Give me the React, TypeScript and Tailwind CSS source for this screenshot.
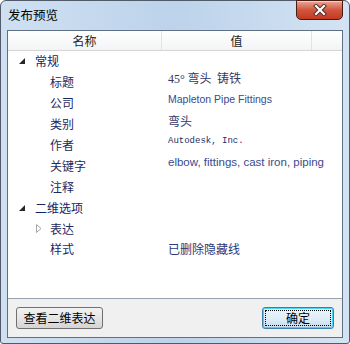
import { ReactNode } from 'react'

const cjk = '"Noto Sans CJK SC", sans-serif'

type Row = {
  label: string
  depth: 0 | 1
  toggle?: 'open' | 'closed'
  value?: ReactNode
}

const rows: Row[] = [
  { label: '常规', depth: 0, toggle: 'open' },
  {
    label: '标题',
    depth: 1,
    value: (
      <span className="text-[12px] text-[#303a6a]">
        <span className="font-['Liberation_Serif'] text-[12px]">45°</span>&nbsp;弯头&nbsp;&nbsp;铸铁
      </span>
    ),
  },
  {
    label: '公司',
    depth: 1,
    value: <span className="font-['Liberation_Sans'] text-[10.5px] text-[#3a4a8c]">Mapleton Pipe Fittings</span>,
  },
  { label: '类别', depth: 1, value: <span className="text-[12px] text-[#303a6a]">弯头</span> },
  {
    label: '作者',
    depth: 1,
    value: <span className="font-['Liberation_Mono'] text-[9px] text-[#1e2a66]">Autodesk, Inc.</span>,
  },
  {
    label: '关键字',
    depth: 1,
    value: (
      <span className="font-['Liberation_Sans'] text-[11.5px] text-[#3a4a8c]">elbow, fittings, cast iron, piping</span>
    ),
  },
  { label: '注释', depth: 1 },
  { label: '二维选项', depth: 0, toggle: 'open' },
  { label: '表达', depth: 1, toggle: 'closed' },
  { label: '样式', depth: 1, value: <span className="text-[12px] text-[#2a3878]">已删除隐藏线</span> },
]

function Toggle({ kind }: { kind: 'open' | 'closed' }) {
  if (kind === 'open') {
    return (
      <svg width="6" height="6" viewBox="0 0 6 6">
        <path d="M6 0 L6 6 L0 6 Z" fill="#262626" />
      </svg>
    )
  }
  return (
    <svg width="6" height="9" viewBox="0 0 6 9">
      <path d="M0.5 0.5 L5 4.5 L0.5 8.5 Z" fill="#fff" stroke="#a6a6a6" />
    </svg>
  )
}

function CloseButton() {
  return (
    <div className="absolute right-[6px] top-[-1px] w-[47px] h-[20px] rounded-b-[5px] border border-[#4a1a14] bg-gradient-to-b from-[#e9a795] via-[#d1543d] to-[#c2391f] flex items-center justify-center shadow-[inset_0_1px_0_rgba(255,255,255,0.5)]">
      <svg width="14" height="12" viewBox="0 0 14 12">
        <path d="M3 2 L11 10 M11 2 L3 10" stroke="#4a2a28" strokeWidth="4" strokeLinecap="square" />
        <path d="M3 2 L11 10 M11 2 L3 10" stroke="#ffffff" strokeWidth="2.2" strokeLinecap="square" />
      </svg>
    </div>
  )
}

export default function App() {
  return (
    <div className="w-[350px] h-[344px] overflow-hidden">
      <div
        className="relative w-[350px] h-[344px] rounded-t-[6px] rounded-b-[3px] border border-[#505a68] bg-gradient-to-r from-[#cfe0f2] via-[#bcd3eb] to-[#d3e3f3] flex flex-col"
        style={{ fontFamily: cjk }}
      >
        <div className="h-[29px] flex items-center pl-[7px] text-[12.5px] text-black">发布预览</div>
        <CloseButton />

        <div className="mx-[6px] h-[308px] border border-[#5f6f84] bg-[#f0f0f0] flex flex-col">
          <div className="h-[268px] bg-white border-b border-[#9aa3ad] flex flex-col">
            <div className="h-[20px] flex border-b border-[#d5d5d5] bg-gradient-to-b from-white to-[#f3f4f6] text-[12px] text-[#1e1e1e]">
              <div className="w-[154px] flex items-center justify-center border-r border-[#e2e2e2]">名称</div>
              <div className="w-[150px] flex items-center justify-center border-r border-[#e2e2e2]">值</div>
              <div className="w-[30px]" />
            </div>

            <div className="flex flex-col">
              {rows.map((r) => (
                <div key={r.label} className="h-[20.9px] flex items-center">
                  <div className="w-[160px] flex items-center">
                    <div className={r.depth === 0 ? 'w-[27px] flex justify-end pr-[10px]' : 'w-[42px] flex justify-end pr-[8px]'}>
                      {r.toggle && <Toggle kind={r.toggle} />}
                    </div>
                    <span className={r.depth === 0 ? 'text-[12px] text-[#15236a]' : 'text-[12px] text-[#1e2a5e]'}>
                      {r.label}
                    </span>
                  </div>
                  <div className={r.label === '样式' ? 'flex items-center' : 'flex items-center pb-[7px]'}>{r.value}</div>
                </div>
              ))}
            </div>
          </div>

          <div className="flex justify-between px-[8px] pt-[8px]">
            <button className="w-[87px] h-[22px] rounded-[3px] border border-[#707070] bg-gradient-to-b from-[#f2f2f2] via-[#e6e6e6] to-[#d4d4d4] text-[12px] text-black flex items-center justify-center">
              查看二维表达
            </button>
            <button className="w-[72px] h-[22px] rounded-[3px] border border-[#3c7fb1] bg-gradient-to-b from-[#eaf6fd] via-[#e0eef8] to-[#c6dcee] p-[2px] shadow-[inset_0_0_0_1px_#48d2f4]">
              <div className="w-full h-full border border-dotted border-black flex items-center justify-center text-[12px] text-black">
                确定
              </div>
            </button>
          </div>
        </div>
      </div>
    </div>
  )
}
